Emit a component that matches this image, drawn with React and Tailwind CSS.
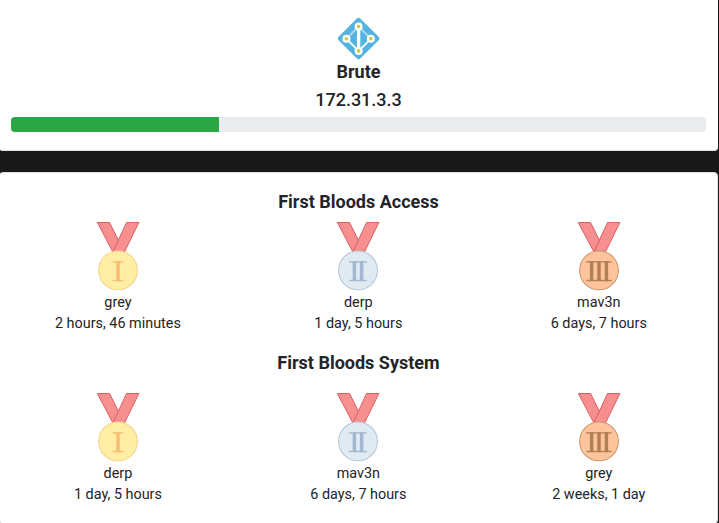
const MEDALS = {
  1: { fill: '#ffeea3', edge: '#f7d48a', mark: '#f5be72', bars: [22] },
  2: { fill: '#dfeaf2', edge: '#b5c6da', mark: '#a3b7ce', bars: [18.4, 25.6] },
  3: { fill: '#ffc49c', edge: '#c99a70', mark: '#b08056', bars: [14.6, 22, 29.4] },
};

function Medal({ rank }) {
  const { fill, edge, mark, bars } = MEDALS[rank];
  const left = bars[0] - 5.3;
  const width = bars[bars.length - 1] - bars[0] + 10.6;
  return (
    <svg width="44" height="70" viewBox="0 0 44 70" className="block">
      <g fill="#f78f8f" stroke="#d96068" strokeWidth="1">
        <path d="M1.3 1.5H13.6L22.5 19.5L27.5 30L24 34H18.5Z" />
        <path d="M30.5 1.5H42.9L27 34H15.5Z" />
      </g>
      <circle cx="22" cy="49.4" r="19.4" fill={fill} stroke={edge} strokeWidth="1.1" />
      <g fill={mark}>
        <rect x={left} y="40.2" width={width} height="1.4" />
        <rect x={left} y="58.8" width={width} height="1.4" />
        {bars.map((x) => (
          <rect key={x} x={x - 1.75} y="40.2" width="3.5" height="20" />
        ))}
      </g>
    </svg>
  );
}

function Bloods({ title, entries, titleClass }) {
  return (
    <section>
      <h2 className={`text-center text-[18px] leading-[22px] font-bold ${titleClass}`}>{title}</h2>
      <div className="-mr-[2px] -ml-[2.3px] grid grid-cols-3">
        {entries.map(([name, time], i) => (
          <div key={name} className="flex flex-col items-center text-[14.4px] leading-[21px]">
            <Medal rank={i + 1} />
            <span className="mt-px">{name}</span>
            <span>{time}</span>
          </div>
        ))}
      </div>
    </section>
  );
}

function Logo() {
  return (
    <svg width="44" height="44" viewBox="0.4 -0.5 44 44" className="block">
      <rect x="6.6" y="6.6" width="30.8" height="30.8" rx="2.8" fill="#55b3e0" transform="rotate(45 22 22)" />
      <path d="M22 10L9.8 22.3M22 10L34.2 22.3" stroke="#a5d6ee" strokeWidth="2" />
      <path d="M9.8 22.3L22 34.4L34.2 22.3" fill="none" stroke="#fff" strokeWidth="1.8" />
      <path d="M22 10V34.4" stroke="#fff" strokeWidth="3.4" />
      {[[22, 10], [9.8, 22.3], [34.2, 22.3], [22, 34.4]].map(([x, y]) => (
        <circle key={`${x}-${y}`} cx={x} cy={y} r="2.9" fill="#b8d432" stroke="#fff" strokeWidth="2.2" />
      ))}
    </svg>
  );
}

export default function App() {
  return (
    <main className="h-[523px] overflow-hidden bg-[#19191a] pr-px font-['Roboto',sans-serif] text-[#212529]">
      <div className="-ml-px">
        <header className="flex h-[151px] flex-col items-center rounded-b border-b border-[#dfdfdf] bg-white px-3 pt-4">
          <Logo />
          <h1 className="mt-px text-[18px] leading-[22px] font-bold">Brute</h1>
          <p className="mt-[6px] text-[18px] leading-[22px] font-medium">172.31.3.3</p>
          <div className="mt-[6px] h-[15px] w-full shrink-0 overflow-hidden rounded bg-[#e9ecef]">
            <div className="h-full w-[29.9%] bg-[#28a745]" />
          </div>
        </header>
        <div className="mt-[21px] flex h-[352px] flex-col gap-[18px] rounded border border-[#dfdfdf] bg-white pt-[18px]">
          <Bloods
            title="First Bloods Access"
            titleClass="mb-[8px]"
            entries={[['grey', '2 hours, 46 minutes'], ['derp', '1 day, 5 hours'], ['mav3n', '6 days, 7 hours']]}
          />
          <Bloods
            title="First Bloods System"
            titleClass="mb-[18px]"
            entries={[['derp', '1 day, 5 hours'], ['mav3n', '6 days, 7 hours'], ['grey', '2 weeks, 1 day']]}
          />
        </div>
      </div>
    </main>
  );
}
